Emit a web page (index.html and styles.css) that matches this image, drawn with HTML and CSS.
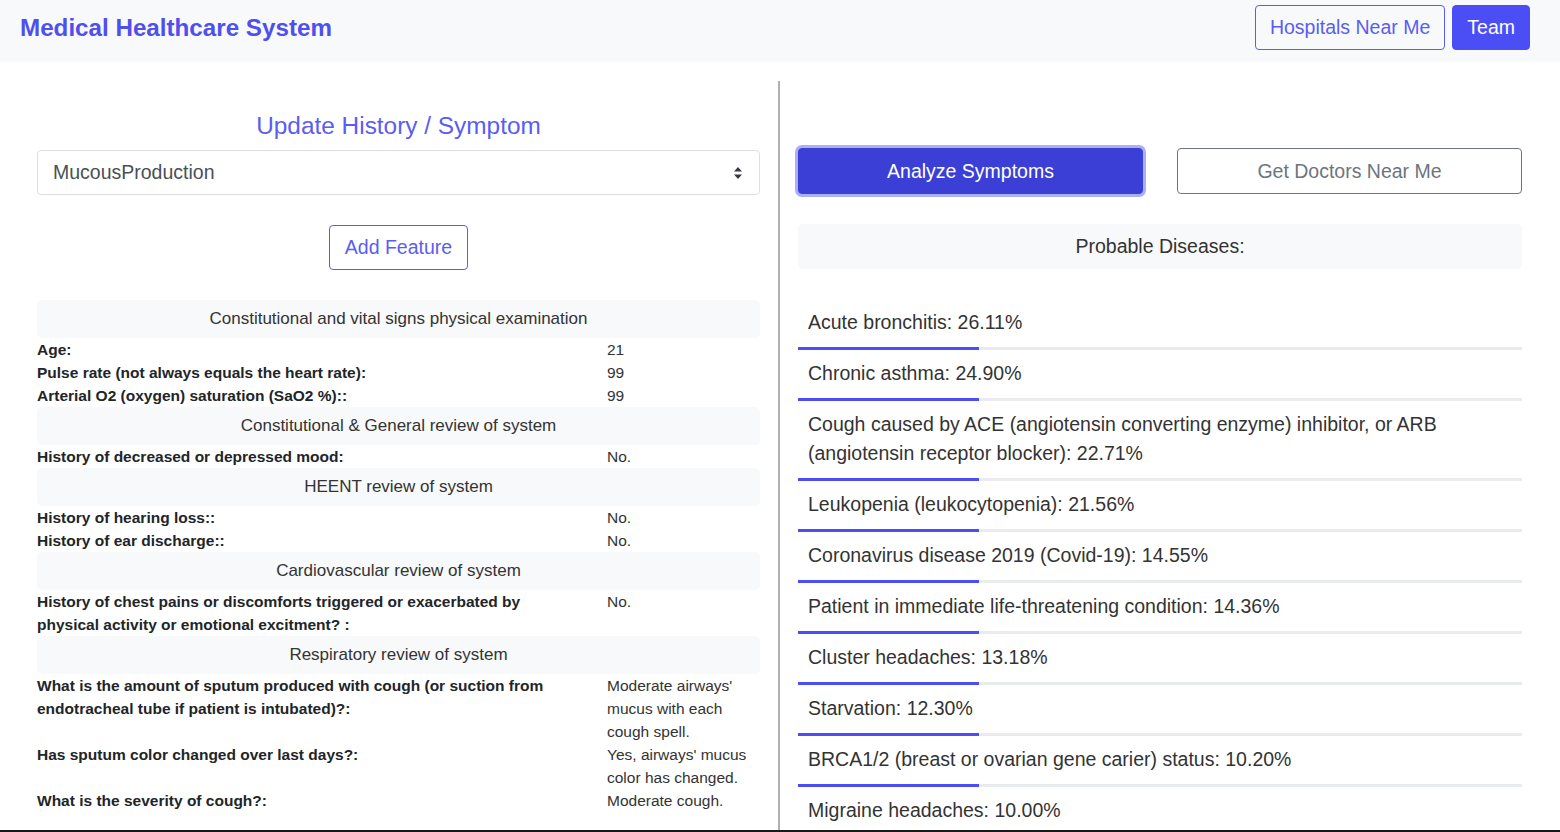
FILE: index.html
```html
<!DOCTYPE html>
<html lang="en">
<head>
<meta charset="utf-8">
<title>Medical Healthcare System</title>
<link rel="stylesheet" href="styles.css">
</head>
<body>
<nav class="navbar">
  <div class="brand">Medical Healthcare System</div>
  <div class="nav-actions">
    <button class="btn btn-outline-primary btn-nav">Hospitals Near Me</button>
    <button class="btn btn-primary btn-nav">Team</button>
  </div>
</nav>
<main class="main">
  <section class="col col-left">
    <h2 class="section-title">Update History / Symptom</h2>
    <div class="select">
      <span>MucousProduction</span>
      <svg class="select-arrow" width="10" height="14" viewBox="0 0 10 14"><path d="M5 1 L9 5.5 H1 Z M5 13 L9 8.5 H1 Z" fill="#343a40"/></svg>
    </div>
    <div class="center">
      <button class="btn btn-outline-primary">Add Feature</button>
    </div>
    <div class="history">
      <div class="band">Constitutional and vital signs physical examination</div>
      <div class="row"><div class="label">Age:</div><div class="value">21</div></div>
      <div class="row"><div class="label">Pulse rate (not always equals the heart rate):</div><div class="value">99</div></div>
      <div class="row"><div class="label">Arterial O2 (oxygen) saturation (SaO2 %)::</div><div class="value">99</div></div>
      <div class="band">Constitutional &amp; General review of system</div>
      <div class="row"><div class="label">History of decreased or depressed mood:</div><div class="value">No.</div></div>
      <div class="band">HEENT review of system</div>
      <div class="row"><div class="label">History of hearing loss::</div><div class="value">No.</div></div>
      <div class="row"><div class="label">History of ear discharge::</div><div class="value">No.</div></div>
      <div class="band">Cardiovascular review of system</div>
      <div class="row"><div class="label">History of chest pains or discomforts triggered or exacerbated by physical activity or emotional excitment? :</div><div class="value">No.</div></div>
      <div class="band">Respiratory review of system</div>
      <div class="row"><div class="label">What is the amount of sputum produced with cough (or suction from endotracheal tube if patient is intubated)?:</div><div class="value">Moderate airways' mucus with each cough spell.</div></div>
      <div class="row"><div class="label">Has sputum color changed over last days?:</div><div class="value">Yes, airways' mucus color has changed.</div></div>
      <div class="row"><div class="label">What is the severity of cough?:</div><div class="value">Moderate cough.</div></div>
    </div>
  </section>
  <section class="col col-right">
    <div class="actions">
      <button class="btn btn-primary btn-focus">Analyze Symptoms</button>
      <button class="btn btn-outline-secondary">Get Doctors Near Me</button>
    </div>
    <div class="band band-lg">Probable Diseases:</div>
    <ul class="diseases">
      <li class="disease"><div class="disease-text">Acute bronchitis: 26.11%</div><div class="track"><div class="fill" style="width:25%"></div></div></li>
      <li class="disease"><div class="disease-text">Chronic asthma: 24.90%</div><div class="track"><div class="fill" style="width:25%"></div></div></li>
      <li class="disease"><div class="disease-text">Cough caused by ACE (angiotensin converting enzyme) inhibitor, or ARB (angiotensin receptor blocker): 22.71%</div><div class="track"><div class="fill" style="width:25%"></div></div></li>
      <li class="disease"><div class="disease-text">Leukopenia (leukocytopenia): 21.56%</div><div class="track"><div class="fill" style="width:25%"></div></div></li>
      <li class="disease"><div class="disease-text">Coronavirus disease 2019 (Covid-19): 14.55%</div><div class="track"><div class="fill" style="width:25%"></div></div></li>
      <li class="disease"><div class="disease-text">Patient in immediate life-threatening condition: 14.36%</div><div class="track"><div class="fill" style="width:25%"></div></div></li>
      <li class="disease"><div class="disease-text">Cluster headaches: 13.18%</div><div class="track"><div class="fill" style="width:25%"></div></div></li>
      <li class="disease"><div class="disease-text">Starvation: 12.30%</div><div class="track"><div class="fill" style="width:25%"></div></div></li>
      <li class="disease"><div class="disease-text">BRCA1/2 (breast or ovarian gene carier) status: 10.20%</div><div class="track"><div class="fill" style="width:25%"></div></div></li>
      <li class="disease"><div class="disease-text">Migraine headaches: 10.00%</div><div class="track"><div class="fill" style="width:25%"></div></div></li>
    </ul>
  </section>
</main>
<div class="screen-edge"></div>
</body>
</html>
```
FILE: styles.css
```css
* { box-sizing: border-box; }
html, body {
  margin: 0;
  padding: 0;
  height: 832px;
  overflow: hidden;
}
body {
  font-family: "Liberation Sans", Arial, sans-serif;
  color: #212529;
  background: #fff;
}
.navbar {
  height: 62px;
  background: #f8f9fa;
  display: flex;
  align-items: flex-start;
  justify-content: space-between;
  padding: 5px 30px 0 20px;
}
.brand {
  font-size: 24.2px;
  font-weight: bold;
  color: #4f4ff0;
  line-height: 45px;
}
.nav-actions {
  display: flex;
  gap: 7px;
}
.btn {
  font-family: "Liberation Sans", Arial, sans-serif;
  font-size: 19.5px;
  line-height: 28px;
  padding: 8px 15px;
  border-radius: 4px;
  border: 1px solid transparent;
  background: transparent;
  cursor: pointer;
}
.btn-nav {
  line-height: 27px;
  padding: 8px 14px;
}
.btn-primary {
  background: #4b4ef5;
  border-color: #4b4ef5;
  color: #fff;
}
.btn-outline-primary {
  color: #5a5df3;
  border-color: #5a5df3;
  background: transparent;
}
.btn-outline-secondary {
  color: #6c757d;
  border-color: #6c757d;
  background: #fff;
}
.btn-focus {
  background: #3b3fd6;
  border-color: #3b3fd6;
  box-shadow: 0 0 0 3px rgba(90, 93, 243, 0.5);
}
.main {
  display: grid;
  grid-template-columns: 761px 761px;
  padding: 19px 19px 0;
}
.col-left {
  border-right: 2px solid #b0b0b0;
  padding: 0 18px 0 18px;
  min-height: 760px;
}
.col-right {
  padding: 0 19px 0 18px;
}
.section-title {
  font-size: 24.4px;
  line-height: 29px;
  font-weight: normal;
  color: #5a5df3;
  text-align: center;
  margin: 30px 0 10px;
}
.select {
  height: 45px;
  border: 1px solid #dcdfe3;
  border-radius: 4px;
  display: flex;
  align-items: center;
  justify-content: space-between;
  padding: 0 16px 0 15px;
  font-size: 19.5px;
  color: #495057;
}
.select-arrow {
  display: block;
}
.center {
  display: flex;
  justify-content: center;
  margin-top: 30px;
}
.center .btn {
  line-height: 27px;
}
.history {
  margin-top: 30px;
}
.band {
  background: #f8f9fa;
  border-radius: 5px;
  text-align: center;
  font-size: 17px;
  line-height: 20px;
  padding: 9px 0 9px;
  color: #333;
}
.row {
  display: grid;
  grid-template-columns: 570px 1fr;
  font-size: 15.5px;
  line-height: 23px;
}
.label {
  font-weight: bold;
  padding-right: 30px;
}
.value {
  color: #333;
}
.actions {
  display: grid;
  grid-template-columns: 345px 345px;
  justify-content: space-between;
  margin-top: 67px;
}
.actions .btn {
  height: 46px;
  padding: 0 15px;
}
.band-lg {
  margin-top: 30px;
  height: 45px;
  font-size: 19.5px;
  line-height: 29px;
  padding: 8px 0;
}
.diseases {
  list-style: none;
  margin: 30px 0 0;
  padding: 0;
}
.disease-text {
  font-size: 19.5px;
  line-height: 29px;
  padding: 9px 10px 10px;
  color: #333;
}
.track {
  height: 3px;
  background: #e9ecef;
}
.fill {
  height: 3px;
  background: #4b4ef5;
}
.screen-edge {
  position: fixed;
  left: 0;
  right: 0;
  bottom: 0;
  height: 2px;
  background: #1a1a1a;
}
```
